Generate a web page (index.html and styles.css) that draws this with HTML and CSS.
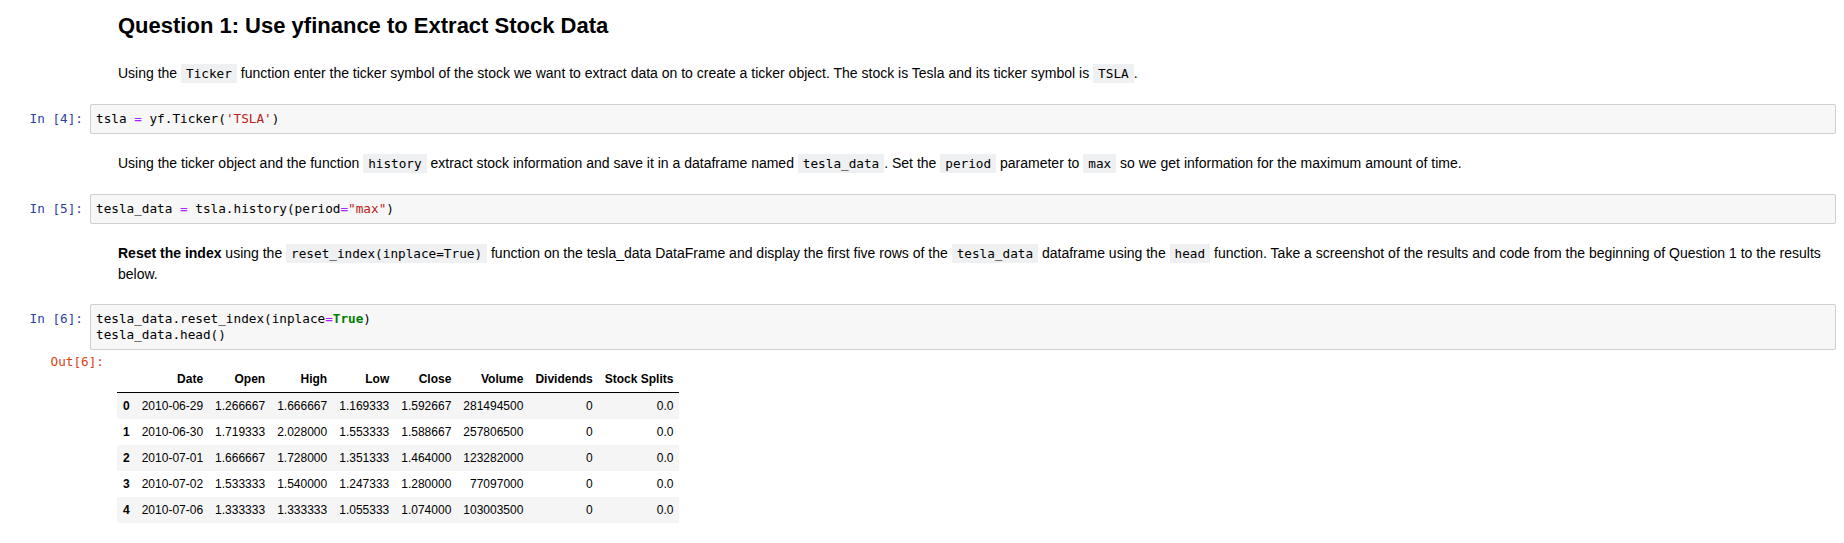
FILE: index.html
```html
<!DOCTYPE html>
<html lang="en">
<head>
<meta charset="utf-8">
<title>Question 1: Use yfinance to Extract Stock Data</title>
<link rel="stylesheet" href="styles.css">
</head>
<body>
<div class="notebook">

  <div class="cell md-cell first">
    <div class="prompt"></div>
    <div class="md">
      <h2 class="title">Question 1: Use yfinance to Extract Stock Data</h2>
      <p class="para gap-title">Using the <code class="ic">Ticker</code> function enter the ticker symbol of the stock we want to extract data on to create a ticker object. The stock is Tesla and its ticker symbol is <code class="ic">TSLA</code>.</p>
    </div>
  </div>

  <div class="cell code-cell">
    <div class="prompt in">In&nbsp;[4]:</div>
    <pre class="code">tsla <span class="op">=</span> yf.Ticker(<span class="str">'TSLA'</span>)</pre>
  </div>

  <div class="cell md-cell">
    <div class="prompt"></div>
    <div class="md">
      <p class="para">Using the ticker object and the function <code class="ic">history</code> extract stock information and save it in a dataframe named <code class="ic">tesla_data</code>. Set the <code class="ic">period</code> parameter to <code class="ic">max</code> so we get information for the maximum amount of time.</p>
    </div>
  </div>

  <div class="cell code-cell">
    <div class="prompt in">In&nbsp;[5]:</div>
    <pre class="code">tesla_data <span class="op">=</span> tsla.history(period<span class="op">=</span><span class="str">"max"</span>)</pre>
  </div>

  <div class="cell md-cell">
    <div class="prompt"></div>
    <div class="md">
      <p class="para"><strong>Reset the index</strong> using the <code class="ic">reset_index(inplace=True)</code> function on the tesla_data DataFrame and display the first five rows of the <code class="ic">tesla_data</code> dataframe using the <code class="ic">head</code> function. Take a screenshot of the results and code from the beginning of Question 1 to the results below.</p>
    </div>
  </div>

  <div class="cell code-cell">
    <div class="prompt in">In&nbsp;[6]:</div>
    <pre class="code">tesla_data.reset_index(inplace<span class="op">=</span><span class="kw">True</span>)
tesla_data.head()</pre>
  </div>

  <div class="output-area">
    <div class="prompt out">Out[6]:</div>
    <div class="output">
      <table class="df">
        <thead>
          <tr><th></th><th>Date</th><th>Open</th><th>High</th><th>Low</th><th>Close</th><th>Volume</th><th>Dividends</th><th>Stock Splits</th></tr>
        </thead>
        <tbody>
          <tr><th>0</th><td>2010-06-29</td><td>1.266667</td><td>1.666667</td><td>1.169333</td><td>1.592667</td><td>281494500</td><td>0</td><td>0.0</td></tr>
          <tr><th>1</th><td>2010-06-30</td><td>1.719333</td><td>2.028000</td><td>1.553333</td><td>1.588667</td><td>257806500</td><td>0</td><td>0.0</td></tr>
          <tr><th>2</th><td>2010-07-01</td><td>1.666667</td><td>1.728000</td><td>1.351333</td><td>1.464000</td><td>123282000</td><td>0</td><td>0.0</td></tr>
          <tr><th>3</th><td>2010-07-02</td><td>1.533333</td><td>1.540000</td><td>1.247333</td><td>1.280000</td><td>77097000</td><td>0</td><td>0.0</td></tr>
          <tr><th>4</th><td>2010-07-06</td><td>1.333333</td><td>1.333333</td><td>1.055333</td><td>1.074000</td><td>103003500</td><td>0</td><td>0.0</td></tr>
        </tbody>
      </table>
    </div>
  </div>

</div>
</body>
</html>
```

FILE: styles.css
```css
html, body {
  margin: 0;
  padding: 0;
  background: #ffffff;
}

body {
  font-family: "Liberation Sans", Arial, sans-serif;
  font-size: 14px;
  color: #000000;
}

.notebook {
  display: flex;
  flex-direction: column;
  padding: 13px 8px 20px 0;
}

.cell {
  display: flex;
  flex-direction: row;
  align-items: flex-start;
}

.prompt {
  flex: 0 0 90px;
  box-sizing: border-box;
  padding-right: 7px;
  text-align: right;
  font-family: "DejaVu Sans Mono", monospace;
  font-size: 12.7px;
  line-height: 16px;
  white-space: nowrap;
}

.prompt.in {
  color: #303f9f;
  padding-top: 7px;
}

.prompt.out {
  color: #d84315;
  flex-basis: 111px;
}

.md-cell {
  margin-top: 19px;
}

.md-cell.first {
  margin-top: 0;
}

.code-cell {
  margin-top: 20px;
}

.md {
  flex: 1 1 auto;
  min-width: 0;
  padding: 0 8px 0 28px;
}

.title {
  margin: 0;
  font-size: 22px;
  font-weight: bold;
  line-height: 25px;
}

.para {
  margin: 0;
  line-height: 20px;
}

.para.gap-title {
  margin-top: 25px;
}

.ic {
  font-family: "DejaVu Sans Mono", monospace;
  font-size: 12.7px;
  background: #eff0f1;
  color: #000000;
  padding: 2px 5px;
}

.code {
  flex: 1 1 auto;
  margin: 0;
  padding: 6px 5px;
  background: #f7f7f7;
  border: 1px solid #cfcfcf;
  border-radius: 2px;
  font-family: "DejaVu Sans Mono", monospace;
  font-size: 12.7px;
  line-height: 16px;
  color: #000000;
}

.op {
  color: #aa22ff;
}

.str {
  color: #ba2121;
}

.kw {
  color: #008000;
  font-weight: bold;
}

.output-area {
  display: flex;
  flex-direction: row;
  align-items: flex-start;
  margin-top: 4px;
}

.output {
  padding-left: 6px;
  padding-top: 12px;
}

.df {
  border-collapse: collapse;
  border: none;
  font-size: 12px;
  color: #000000;
}

.df th,
.df td {
  text-align: right;
  vertical-align: middle;
  padding: 6px;
  line-height: 14px;
  white-space: nowrap;
}

.df th {
  font-weight: bold;
}

.df thead {
  border-bottom: 1px solid #000000;
}

.df tbody tr:nth-child(odd) {
  background: #f5f5f5;
}
```
